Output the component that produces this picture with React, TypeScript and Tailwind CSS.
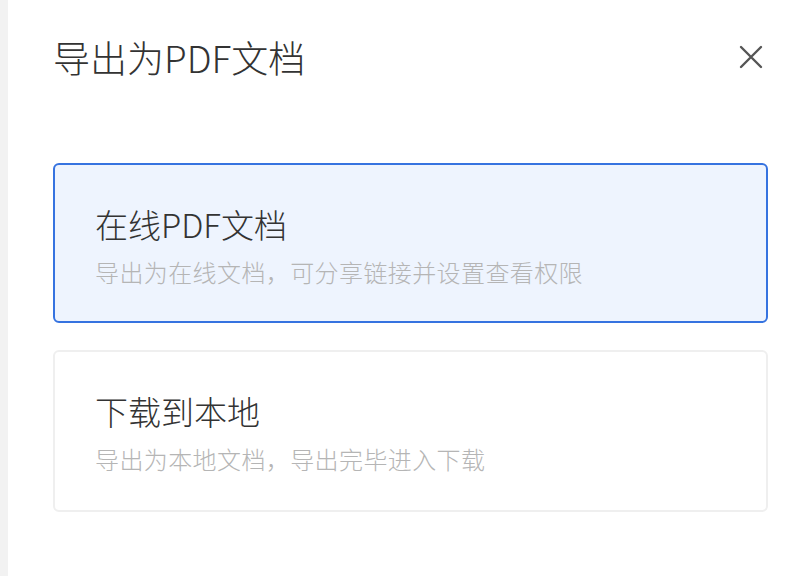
import React from "react";

export default function App() {
  const font = { fontFamily: '"Noto Sans CJK SC", "Noto Sans", sans-serif' };
  return (
    <div className="flex h-[576px] w-[800px] bg-white overflow-hidden" style={font}>
      <div className="w-[8px] shrink-0 bg-[#f2f2f2]" />
      <div className="flex-1 pl-[45px] pr-[32px] pt-[35px]">
        <div className="flex items-center justify-between">
          <h1 className="text-[37px] leading-[44px] text-[#333333] font-light">导出为PDF文档</h1>
          <button className="mr-[2px] flex h-[30px] w-[30px] items-center justify-center text-[#555555]">
            <svg width="24" height="24" viewBox="0 0 24 24" fill="none" stroke="currentColor" strokeWidth="2.4" strokeLinecap="round">
              <path d="M2 2 L22 22 M22 2 L2 22" />
            </svg>
          </button>
        </div>
        <div className="mt-[84px] flex flex-col gap-[27px]">
          <div className="h-[160px] rounded-[6px] border-2 border-[#3673e0] bg-[#eef4fe] pl-[40px] pt-[39px]">
            <div className="text-[33px] leading-[40px] text-[#333333] font-light">在线PDF文档</div>
            <div className="mt-[13px] text-[24px] leading-[30px] tracking-[0.4px] text-[#b5b5b5] font-light">导出为在线文档，可分享链接并设置查看权限</div>
          </div>
          <div className="h-[162px] rounded-[6px] border-2 border-[#efefef] bg-white pl-[40px] pt-[39px]">
            <div className="text-[33px] leading-[40px] text-[#333333] font-light">下载到本地</div>
            <div className="mt-[13px] text-[24px] leading-[30px] tracking-[0.4px] text-[#b5b5b5] font-light">导出为本地文档，导出完毕进入下载</div>
          </div>
        </div>
      </div>
    </div>
  );
}
